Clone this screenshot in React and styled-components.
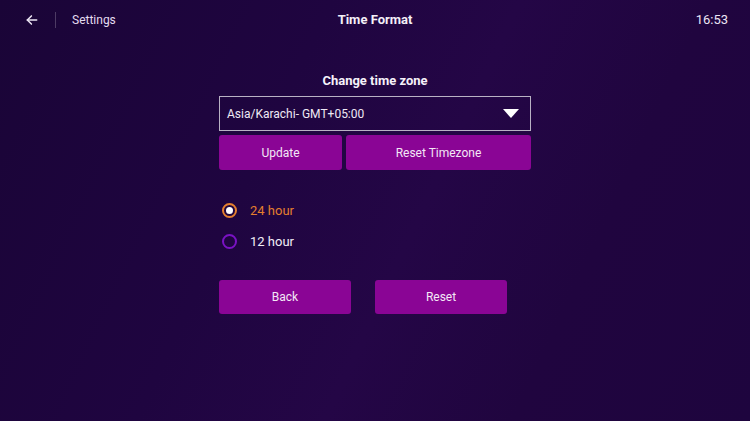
import React, {useState} from 'react';
import styled, {createGlobalStyle} from 'styled-components';

const GlobalStyle = createGlobalStyle`
    html, body {
        margin: 0;
        padding: 0;
        width: 750px;
        height: 421px;
        overflow: hidden;
    }
    body {
        font-family: Roboto, "Liberation Sans", sans-serif;
        color: #ffffff;
    }
`;

const Screen = styled.div`
    width: 750px;
    height: 421px;
    box-sizing: border-box;
    background: linear-gradient(115deg, #1a0537 0%, #1f0540 35%, #240646 55%, #20053f 75%, #1e053e 100%);
    display: flex;
    flex-direction: column;
`;

const Header = styled.header`
    height: 39px;
    display: flex;
    align-items: center;
    padding: 0 22px 0 24px;
    position: relative;
`;

const BackIcon = styled.button`
    background: none;
    border: none;
    padding: 0;
    width: 16px;
    height: 16px;
    display: flex;
    align-items: center;
    justify-content: center;
    color: #ece6f4;
    cursor: pointer;
`;

const Divider = styled.div`
    width: 1px;
    height: 16px;
    background: rgba(255, 255, 255, 0.22);
    margin: 0 16px 0 15px;
`;

const Crumb = styled.span`
    font-size: 12px;
    color: #e4dcef;
`;

const Title = styled.h1`
    position: absolute;
    left: 0;
    right: 0;
    margin: 0;
    text-align: center;
    font-size: 13px;
    font-weight: 700;
    color: #f4f0f8;
    pointer-events: none;
`;

const Clock = styled.span`
    margin-left: auto;
    font-size: 13px;
    color: #ece6f4;
`;

const Body = styled.main`
    width: 312px;
    margin: 0 auto;
    padding-top: 33px;
    display: flex;
    flex-direction: column;
`;

const SectionTitle = styled.h2`
    margin: 0 0 7px;
    text-align: center;
    font-size: 13px;
    font-weight: 700;
    color: #f6f2fa;
    line-height: 17px;
`;

const Select = styled.div`
    height: 35px;
    box-sizing: border-box;
    border: 1px solid #b9b2c4;
    display: flex;
    align-items: center;
    justify-content: space-between;
    padding: 0 11px 0 7px;
    font-size: 12px;
    color: #eee9f4;
`;

const Row = styled.div`
    display: flex;
    gap: ${p => p.$gap}px;
    margin-top: ${p => p.$top}px;
`;

const Button = styled.button`
    width: ${p => p.$width}px;
    height: ${p => p.$height}px;
    border: none;
    border-radius: 3px;
    background: #8a0595;
    color: #f3e8f6;
    font-family: Roboto, "Liberation Sans", sans-serif;
    font-size: 12px;
    padding: 0;
    cursor: pointer;
`;

const RadioGroup = styled.div`
    margin-top: 32px;
    display: flex;
    flex-direction: column;
    gap: 15px;
    padding-left: 3px;
`;

const RadioRow = styled.label`
    display: flex;
    align-items: center;
    height: 16px;
    gap: 13px;
    font-size: 13px;
    color: ${p => (p.$checked ? '#e47f2e' : '#f1edf6')};
    cursor: pointer;
`;

const RadioCircle = styled.span`
    width: 15px;
    height: 15px;
    box-sizing: border-box;
    border-radius: 50%;
    border: 2px solid ${p => (p.$checked ? '#e47f2e' : '#7a12c4')};
    display: flex;
    align-items: center;
    justify-content: center;
    &::after {
        content: '';
        width: 7px;
        height: 7px;
        border-radius: 50%;
        background: #ffffff;
        display: ${p => (p.$checked ? 'block' : 'none')};
    }
`;

export default function App() {
    const [format, setFormat] = useState('24');

    return (
        <Screen>
            <GlobalStyle/>
            <Header>
                <BackIcon aria-label="Back">
                    <svg width="14" height="14" viewBox="0 0 24 24" fill="none" stroke="currentColor"
                         strokeWidth="2.6" strokeLinecap="round" strokeLinejoin="round">
                        <path d="M20 12H4"/>
                        <path d="M11 5l-7 7 7 7"/>
                    </svg>
                </BackIcon>
                <Divider/>
                <Crumb>Settings</Crumb>
                <Title>Time Format</Title>
                <Clock>16:53</Clock>
            </Header>

            <Body>
                <SectionTitle>Change time zone</SectionTitle>
                <Select>
                    <span>Asia/Karachi- GMT+05:00</span>
                    <svg width="16" height="9" viewBox="0 0 16 9">
                        <path d="M0 0h16L8 9z" fill="#ffffff"/>
                    </svg>
                </Select>
                <Row $gap={4} $top={4}>
                    <Button $width={123} $height={35}>Update</Button>
                    <Button $width={185} $height={35}>Reset Timezone</Button>
                </Row>

                <RadioGroup>
                    {[['24', '24 hour'], ['12', '12 hour']].map(([value, label]) => (
                        <RadioRow key={value} $checked={format === value} onClick={() => setFormat(value)}>
                            <RadioCircle $checked={format === value}/>
                            {label}
                        </RadioRow>
                    ))}
                </RadioGroup>

                <Row $gap={24} $top={31}>
                    <Button $width={132} $height={34}>Back</Button>
                    <Button $width={132} $height={34}>Reset</Button>
                </Row>
            </Body>
        </Screen>
    );
}
